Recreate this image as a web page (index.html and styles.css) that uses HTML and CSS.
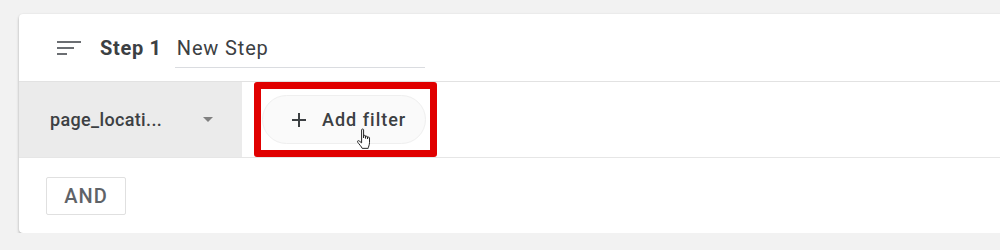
FILE: index.html
```html
<!DOCTYPE html>
<html>
<head>
<meta charset="utf-8">
<link rel="stylesheet" href="styles.css">
</head>
<body>
<div class="card">
  <div class="header">
    <svg class="sort-icon" width="24" height="16" viewBox="0 0 24 16">
      <rect x="0" y="1" width="24" height="2" fill="#6b6e72"/>
      <rect x="0" y="7" width="17" height="2" fill="#6b6e72"/>
      <rect x="0" y="13" width="10" height="2" fill="#6b6e72"/>
    </svg>
    <span class="step-label">Step 1</span>
    <div class="step-name">New Step</div>
  </div>
  <div class="filter-row">
    <div class="dimension">
      <span class="dim-text">page_locati...</span>
      <svg class="caret" width="10" height="5" viewBox="0 0 10 5"><path d="M0 0 L10 0 L5 5 Z" fill="#808080"/></svg>
    </div>
    <div class="highlight">
      <div class="add-btn">
        <svg class="plus" width="16" height="16" viewBox="0 0 16 16"><path d="M8 1 V15 M1 8 H15" stroke="#3c4043" stroke-width="2"/></svg>
        <span>Add filter</span>
        <svg class="cursor" width="22" height="22" viewBox="0 0 20 20">
          <path d="M6 1.5 C6 0.8 7.8 0.8 7.8 1.5 V9 V7.2 C7.8 6.5 9.6 6.5 9.6 7.2 V9.5 V8 C9.6 7.3 11.4 7.3 11.4 8 V10 V8.8 C11.4 8.1 13.2 8.1 13.2 8.8 V13 C13.2 15.5 12 17.5 12 18.5 H6.5 C6 17 3.5 14.5 2.5 13 C1.8 12 2.8 11 3.8 11.8 L6 13.5 Z" fill="#fff" stroke="#222" stroke-width="0.9" stroke-linejoin="round"/>
        </svg>
      </div>
    </div>
  </div>
  <div class="and-row">
    <div class="and-btn">AND</div>
  </div>
</div>
</body>
</html>
```

FILE: styles.css
```css
html, body {
  margin: 0;
  padding: 0;
  background: #f2f2f2;
  overflow: hidden;
  font-family: Roboto, "Liberation Sans", Arial, sans-serif;
}

.card {
  margin: 14px 0 0 19px;
  width: 1000px;
  background: #fff;
  border-radius: 4px 0 0 4px;
  box-shadow: 0 2px 3px rgba(0,0,0,0.25), 0 0 2px rgba(0,0,0,0.08);
}

.header {
  height: 67px;
  display: flex;
  align-items: center;
  padding-left: 38px;
  border-bottom: 1px solid #e2e2e2;
}

.sort-icon {
  flex: none;
  margin-top: 1px;
}

.step-label {
  margin-left: 19px;
  font-size: 20px;
  font-weight: 700;
  letter-spacing: 0.7px;
  color: #3c4043;
}

.step-name {
  margin-left: 13px;
  width: 248px;
  padding: 0 0 7px 2px;
  margin-top: 8px;
  font-size: 20px;
  letter-spacing: 0.85px;
  color: #3c4043;
  border-bottom: 1px solid #dadce0;
}

.filter-row {
  height: 75px;
  display: flex;
  border-bottom: 1px solid #e6e6e6;
}

.dimension {
  width: 223px;
  background: #ebebeb;
  display: flex;
  align-items: center;
  padding: 0 29px 0 31px;
  box-sizing: border-box;
}

.dim-text {
  font-size: 18px;
  font-weight: 500;
  letter-spacing: 0.35px;
  color: #3c4043;
}

.caret {
  margin-left: auto;
}

.highlight {
  margin-left: 12px;
  width: 183px;
  border: 7px solid #e00000;
  border-radius: 3px;
  box-sizing: border-box;
  display: flex;
  align-items: center;
  padding-left: 1px;
}

.add-btn {
  position: relative;
  width: 164px;
  height: 49px;
  border-radius: 25px;
  background: #fafafa;
  border: 1px solid #efefef;
  box-sizing: border-box;
  display: flex;
  align-items: center;
  padding-left: 28px;
  gap: 15px;
  font-size: 18px;
  font-weight: 500;
  letter-spacing: 1px;
  color: #3c4043;
}

.cursor {
  position: absolute;
  left: 92px;
  top: 32px;
}

.and-row {
  height: 75px;
  padding: 19px 0 0 27px;
  box-sizing: border-box;
}

.and-btn {
  width: 80px;
  height: 38px;
  border: 1px solid #e0e0e0;
  border-radius: 2px;
  box-sizing: border-box;
  display: flex;
  align-items: center;
  justify-content: center;
  font-size: 20px;
  font-weight: 500;
  letter-spacing: 1px;
  color: #5f6368;
}
```
